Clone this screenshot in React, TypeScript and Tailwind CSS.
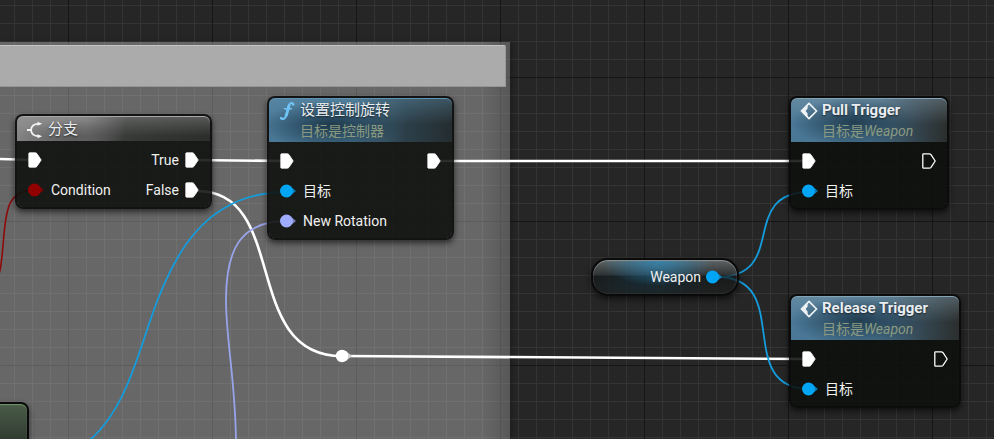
import type { ReactNode } from "react";

type PinKind = "exec" | "exec-open" | "value";

function Pin({ kind, color = "#ffffff" }: { kind: PinKind; color?: string }) {
  if (kind === "value") {
    return (
      <svg width="16" height="14" viewBox="0 0 16 14" className="shrink-0" aria-hidden="true">
        <path d="M11.5 3.2 L16 7 L11.5 10.8 Z" fill={color} opacity="0.7" />
        <circle cx="6.5" cy="7" r="6.5" fill={color} />
      </svg>
    );
  }
  const open = kind === "exec-open";
  return (
    <svg width="14" height="16" viewBox="0 0 14 16" className="shrink-0" aria-hidden="true">
      <path
        d="M1.5 0.8 H7.2 Q8.3 0.8 9 1.7 L13.2 8 L9 14.3 Q8.3 15.2 7.2 15.2 H1.5 Q0.8 15.2 0.8 14.5 V1.5 Q0.8 0.8 1.5 0.8 Z"
        fill={open ? "none" : color}
        stroke={color}
        strokeWidth={open ? 1.3 : 0.8}
        strokeLinejoin="round"
      />
    </svg>
  );
}

function EventIcon() {
  return (
    <svg width="18" height="18" viewBox="0 0 18 18" aria-hidden="true">
      <path d="M9 1.4 L16.6 9 L9 16.6 L1.4 9 Z" fill="none" stroke="#eef2f4" strokeWidth="1.7" strokeLinejoin="round" />
      <path d="M7.6 2.8 L1.4 9 L7.6 15.2 V11.4 L5.6 9 L7.6 6.6 Z" fill="#eef2f4" />
    </svg>
  );
}

function BranchIcon() {
  return (
    <svg width="18" height="18" viewBox="0 0 18 18" aria-hidden="true">
      <path d="M1 9 H5 M5 9 C5.4 4.6 8 2.8 12.5 2.8 M5 9 C5.4 13.4 8 15.2 12.5 15.2" fill="none" stroke="#f4f4f4" strokeWidth="1.8" />
      <path d="M11.5 0.8 L16.2 2.8 L11.5 4.8 Z M11.5 13.2 L16.2 15.2 L11.5 17.2 Z" fill="#f4f4f4" />
    </svg>
  );
}

function FunctionIcon() {
  return (
    <svg width="18" height="20" viewBox="0 0 18 20" fill="none" stroke="#70c3f5" strokeLinecap="round" aria-hidden="true">
      <path d="M15.3 3.4 C14.8 1.6 12.2 1.4 11 4.2 C9.8 7.2 9.2 12 7.8 15.4 C6.8 18.2 4 18.8 3 17.2" strokeWidth="2" />
      <path d="M11 4.8 C9.9 8.2 9.4 11.6 8.1 14.6" strokeWidth="2.8" />
      <path d="M6.4 7.8 H13.4" strokeWidth="1.4" />
      <path d="M15 3.3 H15.2 M3.2 17.1 H3.4" strokeWidth="2.4" />
    </svg>
  );
}

const tones = {
  blue: "bg-[radial-gradient(ellipse_38%_55%_at_34%_62%,rgba(24,48,65,0.85),transparent),linear-gradient(to_bottom,rgba(110,160,190,0.35),transparent_60%),linear-gradient(to_right,#4a7897_0%,#426c87_45%,#2c3f49_75%,#242d30_100%)] shadow-[inset_0_1px_0_#5d93b5]",
  event:
    "bg-[radial-gradient(ellipse_40%_55%_at_40%_55%,rgba(24,48,65,0.8),transparent),linear-gradient(to_bottom,rgba(140,165,180,0.4),transparent_60%),linear-gradient(to_right,#4a7897_0%,#456f8b_50%,#34454f_80%,#2b2e2d_100%)] shadow-[inset_0_1px_0_#84a3b5]",
  gray: "bg-[radial-gradient(ellipse_30%_70%_at_30%_85%,rgba(75,75,75,0.6),transparent),linear-gradient(to_bottom,rgba(170,170,170,0.35),transparent_80%),linear-gradient(100deg,#858585_0%,#737373_36%,#383a38_56%,#2c2e2c_100%)] shadow-[inset_0_1px_0_#a8a8a8]",
};

function GraphNode({
  place,
  tone,
  icon,
  title,
  subtitle,
  bold = false,
  children,
}: {
  place: string;
  tone: keyof typeof tones;
  icon: ReactNode;
  title: string;
  subtitle?: ReactNode;
  bold?: boolean;
  children: ReactNode;
}) {
  return (
    <article className={`absolute rounded-lg border-2 border-[#090a09]/90 bg-[#0e100d]/88 bg-clip-padding pb-0.5 shadow-[0_3px_6px_rgba(0,0,0,0.6)] ${place}`}>
      <header className={`grid min-h-[25px] grid-cols-[18px_1fr] content-center items-center gap-x-1 rounded-t-md pt-0.5 pl-[9px] leading-[21px] ${tones[tone]}`}>
        {icon}
        <h2 className={`text-[15px] whitespace-nowrap text-[#e9edf0] [text-shadow:0_1px_2px_rgba(0,0,0,0.6)] ${bold ? "font-bold" : ""}`}>{title}</h2>
        {subtitle && <p className="col-start-2 text-sm leading-[21px] whitespace-nowrap text-[#8a9a80]">{subtitle}</p>}
      </header>
      <div className="pt-1">{children}</div>
    </article>
  );
}

function Row({ left, right }: { left?: ReactNode; right?: ReactNode }) {
  return (
    <div className="flex h-[30px] items-center justify-between px-[11px]">
      <div className="flex items-center gap-[7px]">{left}</div>
      <div className="flex items-center gap-[6px]">{right}</div>
    </div>
  );
}

function Wires() {
  return (
    <svg className="absolute inset-0 h-full w-full" fill="none" aria-hidden="true">
      <g stroke="#ffffff" strokeWidth="2.6">
        <path d="M0 159 L35 160" />
        <path d="M190 160 L287 161" />
        <path d="M433 161 H808" />
        <path d="M197 191 C290 191 240 356 342 356" />
        <path d="M342 356 L808 359" />
      </g>
      <path d="M35 190 C5 190 6 215 3 245 C2 258 1 268 -1 274" stroke="#8e0a0a" strokeWidth="1.6" />
      <g stroke="#149cdc" strokeWidth="1.8">
        <path d="M287 192 C205 192 172 255 150 321 C135 366 122 412 90 440" />
        <path d="M717 277 C790 277 737 192 810 192" />
        <path d="M717 277 C795 277 732 389 810 389" />
      </g>
      <path d="M287 221 C240 221 226 250 226 300 C226 340 236 385 236 445" stroke="#98a4ea" strokeWidth="1.8" />
      <path d="M346 351 L352 356 L346 361 Z" fill="#d0d0d0" />
      <circle cx="342" cy="356" r="6.2" fill="#ffffff" />
    </svg>
  );
}

const cyan = "#00a5f5";

function EventNode({ place, title }: { place: string; title: string }) {
  return (
    <GraphNode
      place={place}
      tone="event"
      icon={<EventIcon />}
      title={title}
      bold
      subtitle={
        <>
          目标是<em>Weapon</em>
        </>
      }
    >
      <Row left={<Pin kind="exec" />} right={<Pin kind="exec-open" />} />
      <Row
        left={
          <>
            <Pin kind="value" color={cyan} />
            <span>目标</span>
          </>
        }
      />
    </GraphNode>
  );
}

export default function App() {
  return (
    <main className="relative h-screen w-full overflow-hidden bg-[#262626] bg-[linear-gradient(to_right,#161616_1px,transparent_1px),linear-gradient(to_bottom,#161616_1px,transparent_1px),linear-gradient(to_right,#343434_1px,transparent_1px),linear-gradient(to_bottom,#343434_1px,transparent_1px)] bg-[length:144px_144px,144px_144px,18px_18px,18px_18px] bg-[position:68px_0,0_77px,14px_0,0_5px] font-[Roboto,'Noto_Sans_CJK_SC',sans-serif] text-sm text-[#f0f0f0]">
      <section className="absolute top-[42px] bottom-0 left-0 w-[510px] bg-[#dbdbdb]/36 bg-[linear-gradient(to_left,rgba(50,50,50,0.3),transparent_28px)] pt-[3px] pr-1 shadow-[2px_0_5px_rgba(0,0,0,0.25)]">
        <div className="h-[42px] rounded-tr-xs border-t border-r border-b border-t-[#c4c4c4] border-r-[#999999] border-b-[#969696] bg-[#ababab]" />
      </section>

      <Wires />

      <GraphNode place="left-[15px] top-[114px] w-[197px]" tone="gray" icon={<BranchIcon />} title="分支">
        <Row
          left={<Pin kind="exec" />}
          right={
            <>
              <span>True</span>
              <Pin kind="exec" />
            </>
          }
        />
        <Row
          left={
            <>
              <Pin kind="value" color="#920101" />
              <span>Condition</span>
            </>
          }
          right={
            <>
              <span>False</span>
              <Pin kind="exec" />
            </>
          }
        />
      </GraphNode>

      <GraphNode place="left-[267px] top-[96px] w-[187px]" tone="blue" icon={<FunctionIcon />} title="设置控制旋转" subtitle="目标是控制器">
        <Row left={<Pin kind="exec" />} right={<Pin kind="exec" />} />
        <Row
          left={
            <>
              <Pin kind="value" color={cyan} />
              <span>目标</span>
            </>
          }
        />
        <Row
          left={
            <>
              <Pin kind="value" color="#9fabff" />
              <span>New Rotation</span>
            </>
          }
        />
      </GraphNode>

      <EventNode place="left-[789px] top-[96px] w-[160px]" title="Pull Trigger" />
      <EventNode place="left-[789px] top-[294px] w-[172px]" title="Release Trigger" />

      <article className="absolute top-[258px] left-[591px] flex h-[38px] w-[148px] items-center justify-end gap-[5px] rounded-[17px] border-2 border-[#090a09] bg-[radial-gradient(ellipse_40%_75%_at_45%_0%,rgba(50,135,180,0.9),transparent),radial-gradient(ellipse_45%_60%_at_40%_60%,rgba(20,60,80,0.5),transparent),linear-gradient(to_bottom,rgba(110,115,115,0.8)_0%,rgba(50,54,54,0.7)_45%,rgba(18,20,19,0.7)_46%,rgba(28,30,29,0.7)_100%)] pr-[15px] shadow-[inset_0_1px_1px_#8a9294,inset_0_0_1px_#6a6f70,0_3px_6px_rgba(0,0,0,0.6)]">
        <span>Weapon</span>
        <Pin kind="value" color={cyan} />
      </article>

      <article className="absolute top-[402px] -left-24 h-24 w-[125px] rounded-lg border-2 border-[#090a09] bg-linear-to-b from-[#4a5c48] to-[#252b25] to-60% shadow-[inset_0_1px_1px_#74946c,0_3px_6px_rgba(0,0,0,0.5)]" />
    </main>
  );
}
